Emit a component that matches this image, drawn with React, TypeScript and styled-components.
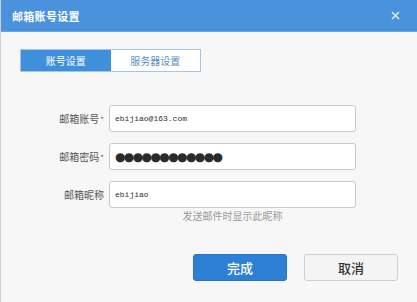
import React from 'react';
import styled, { createGlobalStyle } from 'styled-components';

const GlobalStyle = createGlobalStyle`
  html, body {
    margin: 0;
    padding: 0;
    background: #f7f7f7;
  }
  * {
    box-sizing: border-box;
  }
`

const Dialog = styled.div`
  width: 417px;
  height: 302px;
  display: flex;
  flex-direction: column;
  background: #f7f7f7;
  border-left: 1px solid #cfcfcf;
  font-family: "Noto Sans CJK SC", "Liberation Sans", sans-serif;
`

const TitleBar = styled.div`
  height: 32px;
  flex: none;
  display: flex;
  align-items: center;
  justify-content: space-between;
  padding: 0 16px 0 11px;
  background: #4a92dc;
  border-bottom: 1px solid #6aa6e2;
`

const Title = styled.h1`
  margin: 0;
  font-size: 11px;
  font-weight: 700;
  color: #ffffff;
  letter-spacing: 0.3px;
`

const CloseButton = styled.button`
  width: 12px;
  height: 12px;
  padding: 0;
  border: none;
  background: transparent;
  display: flex;
  align-items: center;
  justify-content: center;
`

const Tabs = styled.div`
  display: flex;
  margin: 17px 0 0 19px;
  width: 181px;
  height: 23px;
  border: 1px solid #a9c4e3;
`

const Tab = styled.div<{ $active?: boolean }>`
  flex: 1;
  display: flex;
  align-items: center;
  justify-content: center;
  font-size: 10px;
  background: ${p => p.$active ? '#3f8fdc' : '#ffffff'};
  color: ${p => p.$active ? '#ffffff' : '#5a8fc8'};
`

const Form = styled.div`
  display: flex;
  flex-direction: column;
  gap: 11px;
  margin-top: 33px;
`

const Row = styled.div`
  display: flex;
  align-items: center;
  gap: 5px;
`

const Label = styled.label`
  width: 103px;
  text-align: right;
  font-size: 10px;
  color: #555;
`

const Star = styled.span`
  font-size: 8px;
  color: #666;
  margin-left: 1px;
`

const Field = styled.div`
  width: 247px;
  height: 27px;
  display: flex;
  align-items: center;
  padding-left: 5px;
  background: #ffffff;
  border: 1px solid #c9c9c9;
  border-radius: 3px;
  font-family: "Liberation Mono", "DejaVu Sans Mono", monospace;
  font-size: 8px;
  color: #333;
`

const Dots = styled.span`
  font-family: "DejaVu Sans", sans-serif;
  font-size: 12px;
  letter-spacing: -1.6px;
  color: #2b2b2b;
`

const Hint = styled.div`
  margin: 0 0 0 108px;
  width: 247px;
  text-align: center;
  font-size: 10px;
  color: #9a9a9a;
`

const Actions = styled.div`
  display: flex;
  justify-content: flex-end;
  gap: 17px;
  margin-top: 31px;
  padding-right: 19px;
`

const Button = styled.button<{ $primary?: boolean }>`
  width: 94px;
  height: 27px;
  border-radius: 3px;
  font-family: "Noto Sans CJK SC", sans-serif;
  font-size: 13px;
  font-weight: 500;
  border: 1px solid ${p => p.$primary ? '#2a74c4' : '#cfcfcf'};
  background: ${p => p.$primary ? '#2d80d6' : '#f4f4f4'};
  color: ${p => p.$primary ? '#ffffff' : '#333333'};
`

const App = () => {
    return (
        <Dialog>
            <GlobalStyle/>
            <TitleBar>
                <Title>邮箱账号设置</Title>
                <CloseButton>
                    <svg width="9" height="9" viewBox="0 0 9 9">
                        <path d="M1 1L8 8M8 1L1 8" stroke="#e8f1fb" strokeWidth="1.4"/>
                    </svg>
                </CloseButton>
            </TitleBar>
            <Tabs>
                <Tab $active>账号设置</Tab>
                <Tab>服务器设置</Tab>
            </Tabs>
            <Form>
                <Row>
                    <Label>邮箱账号<Star>*</Star></Label>
                    <Field>ebijiao@163.com</Field>
                </Row>
                <Row>
                    <Label>邮箱密码<Star>*</Star></Label>
                    <Field><Dots>{'●'.repeat(12)}</Dots></Field>
                </Row>
                <Row>
                    <Label>邮箱昵称</Label>
                    <Field>ebijiao</Field>
                </Row>
            </Form>
            <Hint>发送邮件时显示此昵称</Hint>
            <Actions>
                <Button $primary>完成</Button>
                <Button>取消</Button>
            </Actions>
        </Dialog>
    );
};

export default App;
